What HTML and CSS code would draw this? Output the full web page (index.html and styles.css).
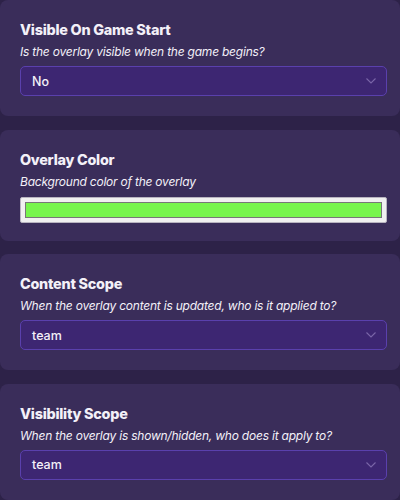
FILE: index.html
```html
<!DOCTYPE html>
<html>
<head>
<meta charset="utf-8">
<link rel="stylesheet" href="styles.css">
</head>
<body>
<div class="list">
  <section class="card">
    <div class="title">Visible On Game Start</div>
    <div class="desc">Is the overlay visible when the game begins?</div>
    <div class="select"><span>No</span><svg class="chev" width="10" height="6" viewBox="0 0 10 6"><path d="M0.5 0.5 L5 5 L9.5 0.5" fill="none" stroke="#7a66a8" stroke-width="1.1"/></svg></div>
  </section>
  <section class="card card-color">
    <div class="title">Overlay Color</div>
    <div class="desc">Background color of the overlay</div>
    <div class="color"><div class="swatch"></div></div>
  </section>
  <section class="card">
    <div class="title">Content Scope</div>
    <div class="desc">When the overlay content is updated, who is it applied to?</div>
    <div class="select"><span>team</span><svg class="chev" width="10" height="6" viewBox="0 0 10 6"><path d="M0.5 0.5 L5 5 L9.5 0.5" fill="none" stroke="#7a66a8" stroke-width="1.1"/></svg></div>
  </section>
  <section class="card">
    <div class="title">Visibility Scope</div>
    <div class="desc">When the overlay is shown/hidden, who does it apply to?</div>
    <div class="select"><span>team</span><svg class="chev" width="10" height="6" viewBox="0 0 10 6"><path d="M0.5 0.5 L5 5 L9.5 0.5" fill="none" stroke="#7a66a8" stroke-width="1.1"/></svg></div>
  </section>
</div>
</body>
</html>
```
FILE: styles.css
```css
html, body {
  margin: 0;
  padding: 0;
  background: #2d2248;
  font-family: Inter, "Noto Sans", sans-serif;
  color: #f3f0f8;
}
.list {
  display: flex;
  flex-direction: column;
  gap: 13.5px;
  width: 400px;
  overflow: hidden;
}
.card {
  background: #3a2d5a;
  border-radius: 8px;
  padding: 21px 13px 20px 20px;
  display: flex;
  flex-direction: column;
}
.card-color {
  padding-bottom: 18px;
}
.title {
  font-weight: 800;
  font-size: 14.4px;
  line-height: 17px;
  letter-spacing: -0.25px;
}
.desc {
  font-style: italic;
  font-size: 12px;
  line-height: 15px;
  margin-top: 6px;
  letter-spacing: -0.22px;
}
.select {
  margin-top: 7px;
  height: 30px;
  box-sizing: border-box;
  border: 1.5px solid #5a40ad;
  border-radius: 5px;
  background: #3d2672;
  display: flex;
  align-items: center;
  justify-content: space-between;
  padding: 0 10px 0 11px;
  font-size: 12.5px;
  font-weight: 500;
}
.chev {
  display: block;
}
.color {
  margin-top: 8px;
  height: 26px;
  box-sizing: border-box;
  background: #f0f0f0;
  border: 1px solid #b8b4c0;
  border-radius: 2px;
  padding: 4px;
}
.swatch {
  height: 100%;
  box-sizing: border-box;
  background: #77f54c;
  border: 1px solid #777777;
}
```
